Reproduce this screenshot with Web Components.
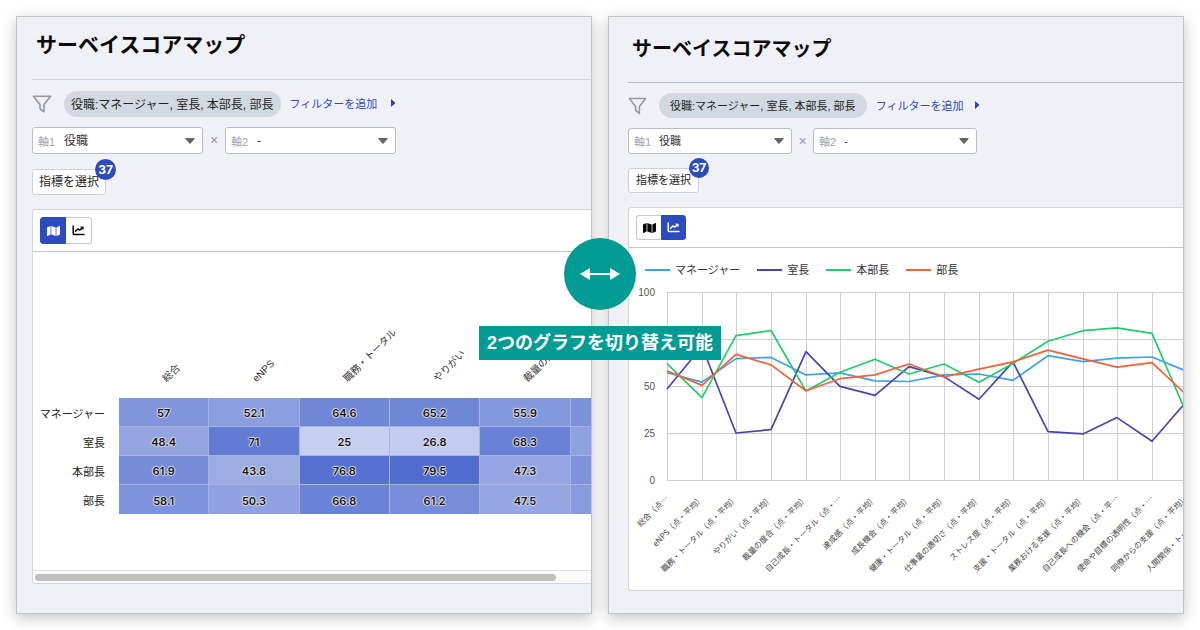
<!DOCTYPE html>
<html lang="ja">
<head>
<meta charset="utf-8">
<title>サーベイスコアマップ</title>
<style>
  body { margin: 0; background: #fff; font-family: "Liberation Sans", "Noto Sans CJK JP", sans-serif; color: #222; }
</style>
</head>
<body>
<survey-compare>
  <survey-panel class="map">
    <view-card active="map"><heat-map></heat-map></view-card>
  </survey-panel>
  <survey-panel class="line">
    <view-card active="line"><line-chart></line-chart></view-card>
  </survey-panel>
  <switch-note slot="note">2つのグラフを切り替え可能</switch-note>
</survey-compare>

<script>
class BaseElement extends HTMLElement {
  constructor() {
    super();
    this.attachShadow({ mode: "open" });
  }
  connectedCallback() {
    this.shadowRoot.innerHTML = `<style>*{box-sizing:border-box}</style>` + this.render();
  }
}

customElements.define("survey-compare", class extends BaseElement {
  render() {
    return `
    <style>
      :host { display: block; position: relative; }
      .panels { display: grid; grid-template-columns: 1fr 1fr; gap: 16px; padding: 16px; min-height: 100vh; box-sizing: border-box; }
      ::slotted(.map) {
        --pad: 15px; --title: 21px; --head-top: 16px; --head-bottom: 22px; --rule: #d0d3da;
        --filter-top: 11px; --chip-h: 26px; --chip-pad: 7px; --text: 12px; --icon: 20px; --more-gap: 14px;
        --select-w: 171px; --select-h: 27px; --times: 22px; --label-w: 26px;
        --button-top: 15px; --button-h: 26px; --button-pad: 6px; --badge: 21px; --toggle-h: 27px; --toggle-w: 26px;
      }
      ::slotted(.line) {
        --pad: 19px; --title: 20px; --head-top: 20px; --head-bottom: 21px; --rule: #b9bdca;
        --filter-top: 10px; --chip-h: 25px; --chip-pad: 11px; --text: 11px; --icon: 19px; --more-gap: 12px;
        --select-w: 164px; --select-h: 26px; --times: 21px; --label-w: 25px;
        --button-top: 14px; --button-h: 25px; --button-pad: 7px; --badge: 20px; --toggle-h: 25px; --toggle-w: 25px;
      }
    </style>
    <main class="panels"><slot></slot></main>
    <slot name="note"></slot>`;
  }
});

customElements.define("survey-panel", class extends BaseElement {
  render() {
    return `
    <style>
      :host { display: block; min-width: 0; overflow: hidden; box-sizing: border-box; padding-left: var(--pad);
        background: #f0f1f6; border: 1px solid #bfc3d0; box-shadow: 0 4px 14px rgba(0,0,0,.24); }
      header { padding: var(--head-top) 0 var(--head-bottom) 4px; border-bottom: 1px solid var(--rule); margin-bottom: var(--filter-top); }
      h1 { margin: 0; font-size: var(--title); line-height: 24px; font-weight: 700; color: #0b0b0d; }
      .axes { display: flex; margin-top: 10px; }
      .times { width: var(--times); text-align: center; line-height: var(--select-h); font-size: 14px; color: #9298aa; }
      metric-button { margin: var(--button-top) 0 14px; }
    </style>
    <header><h1>サーベイスコアマップ</h1></header>
    <filter-bar></filter-bar>
    <div class="axes">
      <axis-select label="軸1" value="役職"></axis-select>
      <span class="times">×</span>
      <axis-select label="軸2" value="-"></axis-select>
    </div>
    <metric-button count="37">指標を選択</metric-button>
    <slot></slot>`;
  }
});

customElements.define("filter-bar", class extends BaseElement {
  render() {
    return `
    <style>
      :host { display: flex; align-items: center; }
      .funnel { width: var(--icon); height: 18px; margin-right: 12px; }
      .chip { border: 0; margin: 0 9px 0 0; height: var(--chip-h); padding: 0 var(--chip-pad) 2px; border-radius: 13px;
        background: #d3d9e0; font: inherit; font-size: var(--text); color: #1d1f24; white-space: nowrap; }
      a { display: flex; align-items: center; gap: var(--more-gap); padding-bottom: 2px; font-size: 11px; color: #2b4bc0; text-decoration: none; white-space: nowrap; }
    </style>
    <svg class="funnel" viewBox="0 0 20 18" fill="none" stroke="#9197a8" stroke-width="1.6" stroke-linejoin="round" aria-hidden="true"><path d="M1.4 1.2H18.6L12 9.6V16.8L8 13.6V9.6Z"/></svg>
    <button class="chip" type="button">役職:マネージャー, 室長, 本部長, 部長</button>
    <a href="#filter">フィルターを追加<svg width="4" height="8" viewBox="0 0 4 8" fill="#2343bd" aria-hidden="true"><path d="M0 0L4 3.6V4.4L0 8Z"/></svg></a>`;
  }
});

customElements.define("axis-select", class extends BaseElement {
  render() {
    return `
    <style>
      :host { display: block; width: var(--select-w); }
      label { display: flex; align-items: center; height: var(--select-h); padding: 0 7px 0 5px; background: #fff;
        border: 1px solid #b9bdca; border-radius: 3px; font-size: 11px; color: #9da3b3; }
      span { width: var(--label-w); flex: none; }
      select { flex: 1; min-width: 0; appearance: none; border: 0; padding: 0; margin: 0; background: none;
        font: inherit; font-size: var(--text); color: #333; }
    </style>
    <label><span>${this.getAttribute("label")}</span>
      <select><option>${this.getAttribute("value")}</option></select>
      <svg width="10" height="6" viewBox="0 0 10 6" fill="#666" aria-hidden="true"><path d="M.8 0H9.2Q10 .2 9.5 1L5.6 5.5Q5 6 4.4 5.5L.5 1Q0 .2 .8 0Z"/></svg>
    </label>`;
  }
});

customElements.define("metric-button", class extends BaseElement {
  render() {
    return `
    <style>
      :host { display: block; width: max-content; position: relative; }
      button { display: block; height: var(--button-h); padding: 0 var(--button-pad) 3px; background: #fff; border: 1px solid #cdd0d9;
        border-radius: 3px; font: inherit; font-size: var(--text); color: #1d1f24; white-space: nowrap; }
      .badge { position: absolute; right: -10px; top: -10px; width: var(--badge); height: var(--badge); border-radius: 50%;
        background: #2b4bbf; color: #fff; font: 700 12px/21px Inter, "Liberation Sans", sans-serif; line-height: var(--badge); text-align: center; }
    </style>
    <button type="button"><slot></slot></button><span class="badge">${this.getAttribute("count")}</span>`;
  }
});

customElements.define("view-card", class extends BaseElement {
  render() {
    const on = this.getAttribute("active");
    return `
    <style>
      :host { display: block; background: #fff; border: 1px solid #d3d6de; border-right: 0; border-radius: 3px 0 0 3px; overflow: hidden; }
      .bar { display: flex; padding: 7px; border-bottom: 1px solid #c3c6cf; }
      button { display: flex; align-items: center; justify-content: center; width: var(--toggle-w); height: var(--toggle-h);
        padding: 0; background: #fff; border: 1px solid #c6c9d2; color: #0c0c0e; }
      button:first-child { border-radius: 3px 0 0 3px; }
      button:last-child { border-radius: 0 3px 3px 0; }
      button[aria-pressed="true"] { background: #2b4bbf; border-color: #2b4bbf; color: #fff; }
      button[aria-pressed="false"]:first-child { border-right: 0; }
      button[aria-pressed="false"]:last-child { border-left: 0; }
      svg { flex: none; }
    </style>
    <div class="bar">
      <button type="button" aria-label="マップ" aria-pressed="${on === "map"}"><svg width="13" height="12" viewBox="0 0 576 512" fill="currentColor"><path d="M0 117.66v346.32c0 11.32 11.43 19.06 21.94 14.86L160 416V32L20.12 87.95A32 32 0 0 0 0 117.66zM192 416l192 64V96L192 32v384zM554.06 33.16L416 96v384l139.88-55.95A32 32 0 0 0 576 394.34V48.02c0-11.32-11.43-19.06-21.94-14.86z"/></svg></button>
      <button type="button" aria-label="折れ線" aria-pressed="${on === "line"}"><svg width="13" height="11" viewBox="0 0 13 11" fill="none" stroke="currentColor" stroke-width="1.5" stroke-linecap="round" stroke-linejoin="round"><path d="M1.2 1V8.6Q1.2 9.6 2.2 9.6H12M3.6 6.2L6 3.9L7.8 5.1L10.4 2.7"/><path d="M9 2H11.2V4.2Z" fill="currentColor" stroke-width=".8"/></svg></button>
    </div>
    <slot></slot>`;
  }
});

const scores = {
  "マネージャー": [57, 52.1, 64.6, 65.2, 55.9, 57, 52.7, 52.4, 55.9, 56.4, 53, 66.1, 62.9, 64.8, 65.4, 58],
  "室長": [48.4, 71, 25, 26.8, 68.3, 49.8, 45, 60.3, 55, 43, 62.8, 25.7, 24.5, 33.2, 20.6, 41.5],
  "本部長": [61.9, 43.8, 76.8, 79.5, 47.3, 57.3, 64.2, 56.4, 61.7, 52, 62, 73.8, 79.4, 80.9, 78, 36],
  "部長": [58.1, 50.3, 66.8, 61.2, 47.5, 53.9, 55.9, 61.7, 54.8, 59, 62.8, 69.1, 64.4, 60, 62.4, 45.5]
};

customElements.define("heat-map", class extends BaseElement {
  render() {
    const heads = ["総合", "eNPS", "職務・トータル", "やりがい", "裁量の度合"];
    // The sixth column lies behind the card's edge, so only its colour shows.
    const edge = [59, 50, 58, 54];
    const shade = v => {
      const t = v - 25;
      return `rgb(${Math.round(197 - 2.15 * t)},${Math.round(207 - 1.82 * t)},${Math.round(239 - 0.6 * t)})`;
    };
    const rows = Object.entries(scores).map(([name, v], r) =>
      `<tr><th scope="row">${name}</th>${v.slice(0, 5).map(n => `<td style="background:${shade(n)}">${n}</td>`).join("")}<td style="background:${shade(edge[r])}"></td></tr>`).join("");
    return `
    <style>
      :host { display: block; }
      .view { overflow: hidden; padding-bottom: 56px; }
      table { table-layout: fixed; width: 628px; border-spacing: 0; }
      col.name { width: 86px; }
      th, td { padding: 0; font-weight: 400; }
      thead th { height: 146px; position: relative; }
      thead span { position: absolute; left: 50%; bottom: 14px; margin-left: 4px; font-size: 10px; line-height: 10px; white-space: nowrap;
        color: #333; transform: rotate(-45deg); transform-origin: left bottom; }
      tbody th { height: 29px; padding-right: 14px; text-align: right; font-size: 11px; color: #222; white-space: nowrap; }
      td { padding-top: 2px; border-right: 1px solid #a9b4d8; border-bottom: 1px solid #a9b4d8; text-align: center;
        font: 600 11px Inter, "Liberation Sans", sans-serif; color: #111;
        text-shadow: 0 0 1px #fff, 1px 0 1px #d5daec, -1px 0 1px #d5daec, 0 1px 1px #d5daec, 0 -1px 1px #d5daec; }
      tr:last-child td { border-bottom: 0; }
      .track { height: 13px; padding: 3px 2px; background: #fafafa; border-top: 1px solid #e3e3e6; }
      .thumb { height: 7px; width: 94%; border-radius: 4px; background: #bfbfbf; }
    </style>
    <div class="view"><table>
      <colgroup><col class="name"><col><col><col><col><col><col></colgroup>
      <thead><tr><td style="border:0"></td>${heads.map(h => `<th scope="col"><span>${h}</span></th>`).join("")}<td style="border:0"></td></tr></thead>
      <tbody>${rows}</tbody>
    </table></div>
    <div class="track"><div class="thumb"></div></div>`;
  }
});

customElements.define("line-chart", class extends BaseElement {
  render() {
    const colours = ["#3fa0ee", "#4a43b0", "#22cc6a", "#f0623a"];
    const labels = ["総合（点…", "eNPS（点・平均）", "職務・トータル（点・平均）", "やりがい（点・平均）", "裁量の度合（点・平均）",
      "自己成長・トータル（点・…", "達成感（点・平均）", "成長機会（点・平均）", "健康・トータル（点・平均）", "仕事量の適切さ（点・平均）",
      "ストレス度（点・平均）", "支援・トータル（点・平均）", "業務おける支援（点・平均）", "自己成長への機会（点・平…",
      "使命や目標の透明性（点・…", "同僚からの支援（点・平均）", "人間関係・トータル（点・…"];
    const X = i => 38 + Math.round(i * 34.63);
    const Y = v => 200 - v * 1.88;
    const grid = labels.map((_, i) => `<path d="M${X(i) + .5} 12V200"/>`).join("") +
      [0, 25, 50, 75, 100].map(v => `<path d="M38 ${Math.round(Y(v)) + .5}H640"/>`).join("");
    const ticks = [0, 25, 50, 75, 100].map(v => `<text x="26" y="${Math.round(Y(v)) + 4}">${v}</text>`).join("");
    const lines = Object.values(scores).map((s, k) =>
      `<polyline stroke="${colours[k]}" points="${s.map((v, i) => `${X(i)},${Y(v).toFixed(1)}`).join(" ")}"/>`);
    const names = labels.map((t, i) => `<text transform="translate(${X(i) + 2} 219) rotate(-45)">${t}</text>`).join("");
    return `
    <style>
      :host { display: block; overflow: hidden; }
      ul { display: flex; gap: 17px; list-style: none; margin: 0; padding: 12px 0 0 16px; font-size: 11px; line-height: 20px; color: #333; }
      li { display: flex; align-items: center; gap: 5px; white-space: nowrap; }
      i { width: 25px; height: 2px; background: var(--c); }
      svg { display: block; }
      .grid { stroke: #cdced6; fill: none; }
      .lines { fill: none; stroke-width: 1.7; stroke-linejoin: round; }
      .ticks { font-size: 10px; text-anchor: end; fill: #555; }
      .names { font-family: "Noto Sans CJK JP", sans-serif; font-size: 8px; text-anchor: end; fill: #444; }
    </style>
    <ul>${Object.keys(scores).map((n, k) => `<li><i style="--c:${colours[k]}"></i>${n}</li>`).join("")}</ul>
    <svg width="640" height="310" role="img" aria-label="指標ごとの点数">
      <g class="grid">${grid}</g><g class="ticks">${ticks}</g>
      <g class="lines">${lines.join("")}</g><g class="names">${names}</g>
    </svg>`;
  }
});

customElements.define("switch-note", class extends BaseElement {
  render() {
    return `
    <style>
      :host { position: absolute; top: 238px; left: 0; right: 0; display: flex; flex-direction: column; align-items: center; gap: 16px; pointer-events: none; }
      .disc { width: 72px; height: 72px; border-radius: 50%; background: #009c93; display: flex; align-items: center; justify-content: center; }
      p { margin: 0; padding: 0 8px; background: #009c93; color: #fff; font-size: 18px; line-height: 34px; font-weight: 700; white-space: nowrap; }
    </style>
    <div class="disc"><svg width="40" height="12" viewBox="0 0 40 12" fill="#fff" aria-hidden="true"><path d="M0 6L10 0V5H30V0L40 6L30 12V7H10V12Z"/></svg></div>
    <p><slot></slot></p>`;
  }
});
</script>
</body>
</html>
